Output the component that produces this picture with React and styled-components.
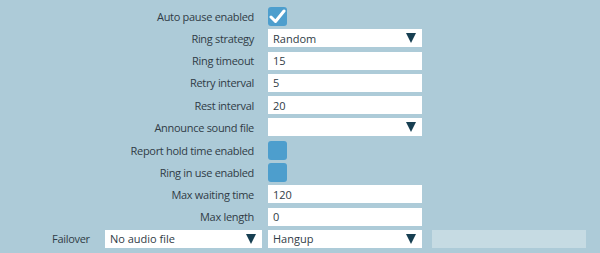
import React from "react";
import styled, { createGlobalStyle } from "styled-components";

const Global = createGlobalStyle`
  html, body { margin: 0; padding: 0; background: #adcbd8; }
  body { font-family: "Open Sans", "DejaVu Sans", sans-serif; }
`;

const Page = styled.div`
  width: 600px;
  height: 253px;
  background: #adcbd8;
  box-sizing: border-box;
  padding-top: 7px;
  display: flex;
  flex-direction: column;
  gap: 4.3px;
  color: #303c46;
  font-size: 11px;
`;

const Row = styled.div`
  display: grid;
  grid-template-columns: 254px 154px;
  column-gap: 14px;
  align-items: center;
  height: 18px;
`;

const Label = styled.div`
  text-align: right;
  white-space: nowrap;
  letter-spacing: -0.3px;
`;

const Field = styled.div`
  height: 18px;
  background: #ffffff;
  box-sizing: border-box;
  padding: 0 5px;
  display: flex;
  align-items: center;
  justify-content: space-between;
  white-space: nowrap;
  color: #303c46;
  width: ${(p) => p.$w || "154px"};
`;

const Disabled = styled.div`
  height: 18px;
  width: 154px;
  background: #c6dbe3;
`;

const Box = styled.div`
  width: 19px;
  height: 19px;
  border-radius: 3px;
  background: #4d9ecd;
  display: flex;
  align-items: center;
  justify-content: center;
`;

const Arrow = styled.span`
  width: 0;
  height: 0;
  border-left: 5px solid transparent;
  border-right: 5px solid transparent;
  border-top: 10px solid #173f52;
  margin-right: 1px;
`;

const FailRow = styled.div`
  display: flex;
  align-items: center;
  height: 18px;
  padding-left: 52px;
`;

const FailLabel = styled.div`
  width: 53px;
  letter-spacing: -0.3px;
`;

const Gap = styled.div`
  width: ${(p) => p.$w}px;
`;

const Check = () => (
  <svg width="17" height="15" viewBox="0 0 17 15">
    <path d="M2 8 L6.5 12.5 L15 2" fill="none" stroke="#fff" strokeWidth="3" strokeLinecap="round" strokeLinejoin="round" />
  </svg>
);

const Select = ({ value, w }) => (
  <Field $w={w}>
    <span>{value}</span>
    <Arrow />
  </Field>
);

export default function App() {
  return (
    <>
      <Global />
      <Page>
        <Row>
          <Label>Auto pause enabled</Label>
          <Box><Check /></Box>
        </Row>
        <Row>
          <Label>Ring strategy</Label>
          <Select value="Random" />
        </Row>
        <Row>
          <Label>Ring timeout</Label>
          <Field>15</Field>
        </Row>
        <Row>
          <Label>Retry interval</Label>
          <Field>5</Field>
        </Row>
        <Row>
          <Label>Rest interval</Label>
          <Field>20</Field>
        </Row>
        <Row>
          <Label>Announce sound file</Label>
          <Select value="" />
        </Row>
        <Row>
          <Label>Report hold time enabled</Label>
          <Box />
        </Row>
        <Row>
          <Label>Ring in use enabled</Label>
          <Box />
        </Row>
        <Row>
          <Label>Max waiting time</Label>
          <Field>120</Field>
        </Row>
        <Row>
          <Label>Max length</Label>
          <Field>0</Field>
        </Row>
        <FailRow>
          <FailLabel>Failover</FailLabel>
          <Select value="No audio file" w="157px" />
          <Gap $w={6} />
          <Select value="Hangup" />
          <Gap $w={10} />
          <Disabled />
        </FailRow>
      </Page>
    </>
  );
}
